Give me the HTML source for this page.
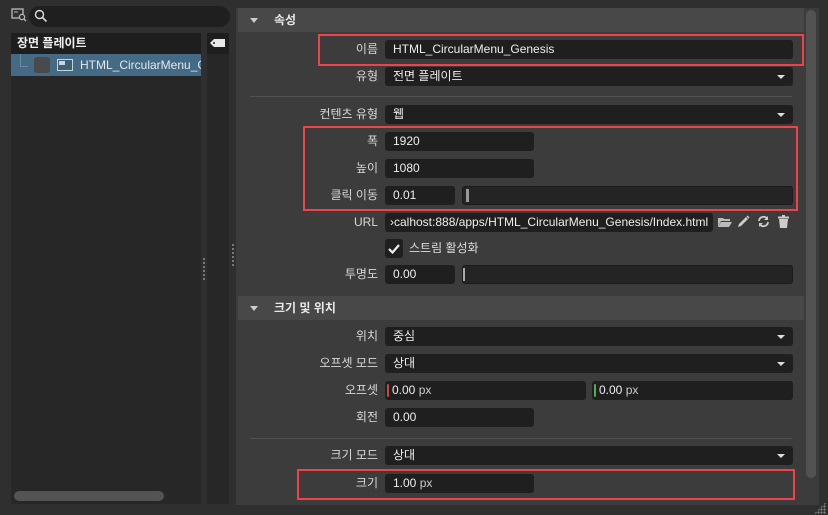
<!DOCTYPE html>
<html><head><meta charset="utf-8">
<style>
*{box-sizing:border-box;margin:0;padding:0}
body{width:828px;height:515px;background:#2f2f2f;position:relative;overflow:hidden;font-family:"Liberation Sans","Noto Sans CJK KR",sans-serif;font-size:12px;color:#e6e6e6}
.a{position:absolute}
.lbl{position:absolute;right:450px;text-align:right;color:#d8d8d8;font-size:12px;line-height:19px;white-space:nowrap}
.f{position:absolute;background:#1f1f1f;border-radius:3px;height:19px;line-height:19px;padding-left:8px;color:#eee;font-size:12px;white-space:nowrap;overflow:hidden}
.dd::after{content:"";position:absolute;right:8px;top:8px;border-left:4px solid transparent;border-right:4px solid transparent;border-top:4px solid #ddd}
.red{position:absolute;border:2px solid #f0424a}
.hdr{position:absolute;left:238px;width:566px;height:24px;background:#484848;font-weight:bold;color:#e8e8e8;line-height:24px;padding-left:36px;font-size:12px}
.hdr::before{content:"";position:absolute;left:12px;top:10px;border-left:4px solid transparent;border-right:4px solid transparent;border-top:5px solid #ccc}
.sl{position:absolute;background:#242424;border:1px solid #1b1b1b;border-radius:3px;height:19px}
.px{color:#ccc}
</style></head><body>
<!-- left top search -->
<svg class="a" style="left:11px;top:8px" width="16" height="14" viewBox="0 0 16 14"><rect x="1" y="1" width="11" height="9" fill="none" stroke="#bbb" stroke-width="1.3"/><path d="M3 4h4" stroke="#bbb"/><circle cx="11" cy="9" r="2.6" fill="#2f2f2f" stroke="#bbb" stroke-width="1.2"/><path d="M13 11l2 2" stroke="#bbb" stroke-width="1.3"/></svg>
<div class="a" style="left:29px;top:6px;width:201px;height:21px;background:#1f1f1f;border-radius:11px"></div>
<svg class="a" style="left:34px;top:9px" width="14" height="14" viewBox="0 0 14 14"><circle cx="5.5" cy="5.5" r="4" fill="none" stroke="#ddd" stroke-width="1.4"/><path d="M8.5 8.5l4 4" stroke="#ddd" stroke-width="1.6"/></svg>
<!-- left tree panel -->
<div class="a" style="left:11px;top:33px;width:190px;height:471px;background:#272727"></div>
<div class="a" style="left:11px;top:33px;width:190px;height:21px;background:#1e1e1e;font-weight:bold;color:#eee;line-height:21px;padding-left:6px;font-size:12px">장면 플레이트</div>
<div class="a" style="left:11px;top:54px;width:190px;height:22px;background:#456a85"></div>
<div class="a" style="left:20px;top:54px;width:1px;height:12px;background:#6b8aa0"></div>
<div class="a" style="left:20px;top:66px;width:8px;height:1px;background:#6b8aa0"></div>
<div class="a" style="left:34px;top:57px;width:16px;height:16px;background:#4a4a4a;border-radius:3px"></div>
<div class="a" style="left:57px;top:59px;width:16px;height:12px;border:1px solid #c8d4dc;background:#3f5f75"></div>
<div class="a" style="left:59px;top:61px;width:6px;height:4px;background:#c8d4dc"></div>
<div class="a" style="left:80px;top:54px;width:121px;height:22px;line-height:22px;color:#e2e8ee;font-size:12px;white-space:nowrap;overflow:hidden">HTML_CircularMenu_Genesis</div>
<div class="a" style="left:14px;top:491px;width:150px;height:10px;background:#535353;border-radius:5px"></div>
<!-- tag column -->
<div class="a" style="left:207px;top:33px;width:22px;height:471px;background:#272727"></div>
<div class="a" style="left:207px;top:33px;width:22px;height:21px;background:#1e1e1e"></div>
<svg class="a" style="left:210px;top:38px" width="16" height="10" viewBox="0 0 16 10"><path d="M4 1h11v8H4L0 5z" fill="#e8e8e8"/><circle cx="4" cy="5" r="1" fill="#1e1e1e"/></svg>
<div class="a" style="left:203px;top:258px;width:2px;height:22px;background:repeating-linear-gradient(#777 0 2px,transparent 2px 4px)"></div>
<div class="a" style="left:232px;top:244px;width:2px;height:22px;background:repeating-linear-gradient(#777 0 2px,transparent 2px 4px)"></div>
<!-- right panel -->
<div class="a" style="left:236px;top:8px;width:583px;height:497px;background:#3c3c3c"></div>
<div class="a" style="left:806px;top:10px;width:10px;height:468px;background:#525252;border-radius:5px"></div>
<div class="hdr" style="top:8px">속성</div>
<div class="hdr" style="top:296px">크기 및 위치</div>
<div class="a" style="left:250px;top:96px;width:542px;height:1px;background:#505050"></div>
<div class="a" style="left:250px;top:438px;width:542px;height:1px;background:#505050"></div>

<div class="lbl" style="top:40px">이름</div><div class="f" style="left:385px;top:40px;width:408px">HTML_CircularMenu_Genesis</div>
<div class="lbl" style="top:67px">유형</div><div class="f dd" style="left:385px;top:67px;width:408px">전면 플레이트</div>
<div class="lbl" style="top:105px">컨텐츠 유형</div><div class="f dd" style="left:385px;top:105px;width:408px">웹</div>
<div class="lbl" style="top:132px">폭</div><div class="f" style="left:385px;top:132px;width:149px">1920</div>
<div class="lbl" style="top:159px">높이</div><div class="f" style="left:385px;top:159px;width:149px">1080</div>
<div class="lbl" style="top:186px">클릭 이동</div><div class="f" style="left:385px;top:186px;width:70px">0.01</div>
<div class="sl" style="left:462px;top:186px;width:331px"><div class="a" style="left:3px;top:2px;width:3px;height:13px;background:#999"></div></div>
<div class="lbl" style="top:213px">URL</div><div class="f" style="left:385px;top:213px;width:328px;padding-left:5px">›calhost:888/apps/HTML_CircularMenu_Genesis/Index.html</div>
<svg class="a" style="left:718px;top:216px" width="14" height="12" viewBox="0 0 14 12"><path d="M0 2h5l1 1h6v2H3L0 11z" fill="#bbb"/><path d="M3 6h11l-3 5H0z" fill="#bbb"/></svg>
<svg class="a" style="left:737px;top:215px" width="13" height="13" viewBox="0 0 13 13"><path d="M1 12l1-3 7-7 2 2-7 7z" fill="#ccc"/><path d="M10 1l2 2" stroke="#ccc" stroke-width="1.5"/></svg>
<svg class="a" style="left:757px;top:215px" width="13" height="13" viewBox="0 0 13 13"><path d="M2 6a4.5 4.5 0 0 1 8-2.5M11 7a4.5 4.5 0 0 1-8 2.5" fill="none" stroke="#ccc" stroke-width="1.8"/><path d="M11 1v4H7zM2 12V8h4z" fill="#ccc"/></svg>
<svg class="a" style="left:778px;top:215px" width="11" height="13" viewBox="0 0 11 13"><rect x="0" y="1.5" width="11" height="2" fill="#ccc"/><rect x="4" y="0" width="3" height="2" fill="#ccc"/><path d="M1 4h9l-1 9H2z" fill="#ccc"/></svg>
<div class="a" style="left:385px;top:239px;width:18px;height:19px;background:#1f1f1f;border-radius:3px"></div>
<svg class="a" style="left:388px;top:243px" width="12" height="11" viewBox="0 0 12 11"><path d="M1 6l3.5 3.5L11 2" fill="none" stroke="#eee" stroke-width="2.2"/></svg>
<div class="a" style="left:409px;top:239px;line-height:19px;color:#ddd">스트림 활성화</div>
<div class="lbl" style="top:265px">투명도</div><div class="f" style="left:385px;top:265px;width:70px">0.00</div>
<div class="sl" style="left:462px;top:265px;width:331px"><div class="a" style="left:0px;top:2px;width:2px;height:13px;background:#aaa"></div></div>

<div class="lbl" style="top:327px">위치</div><div class="f dd" style="left:385px;top:327px;width:408px">중심</div>
<div class="lbl" style="top:354px">오프셋 모드</div><div class="f dd" style="left:385px;top:354px;width:408px">상대</div>
<div class="lbl" style="top:381px">오프셋</div>
<div class="f" style="left:385px;top:381px;width:201px;padding-left:7px"><span class="a" style="left:2px;top:3px;width:2px;height:13px;background:#c44;border-radius:1px"></span>0.00 <span class="px">px</span></div>
<div class="f" style="left:592px;top:381px;width:201px;padding-left:7px"><span class="a" style="left:2px;top:3px;width:2px;height:13px;background:#5a5;border-radius:1px"></span>0.00 <span class="px">px</span></div>
<div class="lbl" style="top:408px">회전</div><div class="f" style="left:385px;top:408px;width:149px">0.00</div>
<div class="lbl" style="top:446px">크기 모드</div><div class="f dd" style="left:385px;top:446px;width:408px">상대</div>
<div class="lbl" style="top:474px">크기</div><div class="f" style="left:385px;top:474px;width:149px">1.00 <span class="px">px</span></div>

<div class="red" style="left:318px;top:34px;width:486px;height:32px"></div>
<div class="red" style="left:303px;top:126px;width:495px;height:85px"></div>
<div class="red" style="left:297px;top:469px;width:498px;height:31px"></div>
<div class="a" style="left:814px;top:502px;width:12px;height:12px;background:radial-gradient(circle,#888 0.8px,transparent 1.2px) 0 0/3px 3px;clip-path:polygon(100% 0,100% 100%,0 100%)"></div>
</body></html>
